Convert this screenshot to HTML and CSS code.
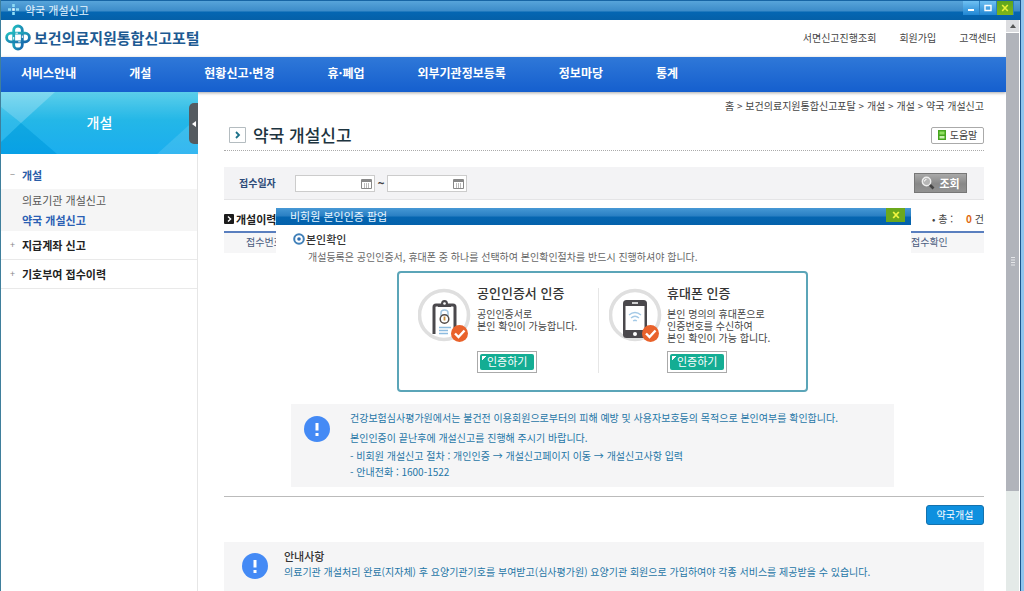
FILE: index.html
```html
<!DOCTYPE html>
<html lang="ko">
<head>
<meta charset="utf-8">
<title>약국 개설신고</title>
<link rel="stylesheet" href="styles.css">
</head>
<body>
<div class="window">
  <header class="titlebar">
    <svg class="titlebar-icon" width="11" height="11" viewBox="0 0 11 11"><path d="M4.200 0h2.600v3H4.200zM4.200 8h2.600v3H4.200zM0 4.200h3v2.600H0zM8 4.200h3v2.600H8z" fill="#8fdcf5"/><path d="M4.200 4.200h2.600v2.600H4.200z" fill="#e6faff"/></svg>
    <span class="titlebar-text">약국 개설신고</span>
    <div class="window-buttons">
      <button class="win-btn" aria-label="최소화"><svg width="8" height="8" viewBox="0 0 8 8"><path d="M1 6h6" stroke="#fff" stroke-width="2"/></svg></button>
      <button class="win-btn" aria-label="최대화"><svg width="8" height="8" viewBox="0 0 8 8"><path d="M1 1.500h6v5H1z" fill="none" stroke="#fff" stroke-width="1.400"/></svg></button>
      <button class="win-btn win-close" aria-label="닫기"><svg width="8" height="8" viewBox="0 0 8 8"><path d="M1.200 1l5.600 6M6.800 1L1.200 7" stroke="#eaf13a" stroke-width="1.600"/></svg></button>
    </div>
  </header>
  <div class="viewport">
    <div class="page">
      <div class="top">
        <a class="brand" href="#">
          <svg width="26" height="27" viewBox="0 0 26 27">
            <defs><linearGradient id="lg" x1="0" y1="0" x2="1" y2="1"><stop offset="0" stop-color="#22bcc0"/><stop offset="1" stop-color="#1667ac"/></linearGradient></defs>
            <rect x="8.7" y="2" width="8.6" height="23" rx="4.3" fill="none" stroke="url(#lg)" stroke-width="2.8"/>
            <rect x="1.6" y="9.2" width="22.8" height="8.6" rx="4.3" fill="none" stroke="url(#lg)" stroke-width="2.8"/>
            <path d="M10.5 9.2h2.4M13.2 17.8h2.4M8.7 13v2.6M17.3 11.5V14" stroke="#fff" stroke-width="1"/>
          </svg>
          <span>보건의료지원통합신고포털</span>
        </a>
        <div class="util"><a href="#">서면신고진행조회</a><a href="#">회원가입</a><a href="#">고객센터</a></div>
      </div>
      <nav class="gnb">
        <a href="#">서비스안내</a><a href="#">개설</a><a href="#">현황신고·변경</a><a href="#">휴·폐업</a><a href="#">외부기관정보등록</a><a href="#">정보마당</a><a href="#">통계</a>
      </nav>
      <div class="columns">
        <aside class="side">
          <div class="side-head">
            <svg class="side-art" viewBox="0 0 197 62" preserveAspectRatio="none"><path d="M0 0h54L20 31 0 15z" fill="#fff" opacity=".28"/><path d="M0 15l20 16L0 50z" fill="#fff" opacity=".12"/><path d="M20 31l36 31H0V50z" fill="#0880c4" opacity=".18"/><path d="M54 0L20 31l36 31h100l41-37V0z" fill="#fff" opacity=".07"/><path d="M156 62l41-37v37z" fill="#fff" opacity=".18"/></svg>
            <h2>개설</h2>
            <button class="side-toggle" aria-label="메뉴 접기"><svg width="4" height="6" viewBox="0 0 4 6"><path d="M4 0v6L0 3z" fill="#fff"/></svg></button>
          </div>
          <ul class="menu">
            <li>
              <a class="menu-item open" href="#"><i>−</i>개설</a>
              <ul class="submenu"><li><a href="#">의료기관 개설신고</a></li><li><a class="current" href="#">약국 개설신고</a></li></ul>
            </li>
            <li><a class="menu-item" href="#"><i>+</i>지급계좌 신고</a></li>
            <li><a class="menu-item" href="#"><i>+</i>기호부여 접수이력</a></li>
          </ul>
        </aside>
        <main class="content">
          <div class="crumbs">홈 &gt; 보건의료지원통합신고포탈 &gt; 개설 &gt; 개설 &gt; 약국 개설신고</div>
          <div class="title-row">
            <svg width="17" height="16" viewBox="0 0 17 16"><path d="M.5.5h16v15H.5z" fill="#fff" stroke="#b4bcc0"/><path d="M7 5l3 3-3 3" fill="none" stroke="#1c7189" stroke-width="1.8"/></svg>
            <h1>약국 개설신고</h1>
            <button class="help"><svg width="8" height="10" viewBox="0 0 8 10"><path d="M0 0h8v10H0z" fill="#46a51e"/><path d="M1.5 1.5h5v3h-5z" fill="#8fe05f"/><path d="M1.5 6h5v2.5h-5z" fill="#c9f2b0"/></svg>도움말</button>
          </div>
          <form class="search">
            <label for="from">접수일자</label>
            <span class="date"><input id="from" type="text"><svg width="11" height="11" viewBox="0 0 11 11"><path d="M.5 1.5h10v9H.5z" fill="#fff" stroke="#888"/><path d="M1 3h9" stroke="#888" stroke-width="2"/><path d="M3.5 5v5M5.5 5v5M7.5 5v5" stroke="#aaa" stroke-width=".8"/></svg></span>
            <span class="tilde">~</span>
            <span class="date"><input id="to" type="text" aria-label="접수일자 종료"><svg width="11" height="11" viewBox="0 0 11 11"><path d="M.5 1.5h10v9H.5z" fill="#fff" stroke="#888"/><path d="M1 3h9" stroke="#888" stroke-width="2"/><path d="M3.5 5v5M5.5 5v5M7.5 5v5" stroke="#aaa" stroke-width=".8"/></svg></span>
            <button class="query" type="button"><svg width="14" height="14" viewBox="0 0 14 14"><path d="M8.5 8.5l4 4" stroke="#444" stroke-width="2.6"/><circle cx="5.5" cy="5.5" r="4.2" fill="#b5b5b5" stroke="#eee" stroke-width="1.4"/><path d="M3.4 5.5a2.2 2.2 0 0 1 2.1-2.1" fill="none" stroke="#fff"/></svg>조회</button>
          </form>
          <section class="results">
            <div class="results-head">
              <svg width="10" height="10" viewBox="0 0 10 10"><rect width="10" height="10" rx="1" fill="#1c1c1c"/><path d="M4 2.5L6.6 5 4 7.5" fill="none" stroke="#fff" stroke-width="1.4"/></svg>
              <h3>개설이력</h3>
              <p class="total"><span>• 총 :</span><span><b>0</b> 건</span></p>
            </div>
            <table><thead><tr><th>접수번호</th><th class="last">접수확인</th></tr></thead></table>
            <div class="popup" role="dialog" aria-labelledby="popup-title">
              <div class="popup-bar"><span id="popup-title">비회원 본인인증 팝업</span><button class="popup-close" aria-label="팝업 닫기"><svg width="8" height="8" viewBox="0 0 8 8"><path d="M1.2 1l5.6 6M6.8 1L1.2 7" stroke="#f2f540" stroke-width="1.8"/></svg></button></div>
              <div class="popup-body">
                <h4><svg width="12" height="12" viewBox="0 0 12 12"><circle cx="6" cy="6" r="4.8" fill="#fff" stroke="#3f7fb8" stroke-width="2"/><circle cx="6" cy="6" r="1.8" fill="#2d6db0"/></svg>본인확인</h4>
                <p class="lead">개설등록은 공인인증서, 휴대폰 중 하나를 선택하여 본인확인절차를 반드시 진행하셔야 합니다.</p>
                <div class="auth">
                  <div class="auth-card">
                    <svg width="54" height="56" viewBox="0 0 54 56">
                      <circle cx="26" cy="27" r="24.5" fill="#fff" stroke="#dfdfdf" stroke-width="3.6"/>
                      <path d="M16 46V19q0-2 2-2h17q2 0 2 2v27" fill="#fff" stroke="#4a484c" stroke-width="3"/>
                      <path d="M20 19v-3h3q0-4 3.500-4t3.500 4h3v3z" fill="#4a484c"/><circle cx="26.500" cy="15.500" r="1.300" fill="#fff"/>
                      <path d="M23 28v-3q0-3 3.500-3t3.500 3v3" fill="none" stroke="#9fc3de" stroke-width="1.500"/>
                      <circle cx="26.500" cy="31" r="4.300" fill="#fff" stroke="#514a48" stroke-width="1.500"/><path d="M26.500 28.500v4" stroke="#c98f3c" stroke-width="1.800"/>
                      <path d="M21 39.500h12M21 42.500h9M21 45.500h9" stroke="#8cbbe0" stroke-width="1.300"/>
                      <circle cx="41.500" cy="45.500" r="8.500" fill="#e9622b"/><path d="M37 45.500l3.500 3.500 6-6.500" fill="none" stroke="#fff" stroke-width="2.400"/>
                    </svg>
                    <div class="auth-text"><h5>공인인증서 인증</h5><p>공인인증서로<br>본인 확인이 가능합니다.</p><button class="auth-btn"><span>인증하기</span></button></div>
                  </div>
                  <div class="auth-card">
                    <svg width="54" height="56" viewBox="0 0 54 56">
                      <circle cx="26" cy="27" r="24.5" fill="#fff" stroke="#dfdfdf" stroke-width="3.6"/>
                      <rect x="14" y="12" width="24" height="38" rx="3.500" fill="#4a484c"/><path d="M16.500 18h19v24h-19z" fill="#fff"/><path d="M23 15h6" stroke="#fff" stroke-width="1.500"/><circle cx="26" cy="46" r="2" fill="#fff"/>
                      <path d="M20 27q6-5 12 0M22 30q4-3.500 8 0M24.200 33q1.800-1.600 3.600 0" fill="none" stroke="#a3c9e6" stroke-width="1.400"/>
                      <circle cx="41.500" cy="45.500" r="8.500" fill="#e9622b"/><path d="M37 45.500l3.500 3.500 6-6.500" fill="none" stroke="#fff" stroke-width="2.400"/>
                    </svg>
                    <div class="auth-text"><h5>휴대폰 인증</h5><p>본인 명의의 휴대폰으로<br>인증번호를 수신하여<br>본인 확인이 가능 합니다.</p><button class="auth-btn"><span>인증하기</span></button></div>
                  </div>
                </div>
                <div class="info">
                  <svg width="26" height="26" viewBox="0 0 26 26"><circle cx="13" cy="13" r="13" fill="#448af5"/><path d="M13 7v7.500M13 17v3" stroke="#fff" stroke-width="3"/></svg>
                  <div class="info-text">
                    <p>건강보험심사평가원에서는 불건전 이용회원으로부터의 피해 예방 및 사용자보호등의 목적으로 본인여부를 확인합니다.</p>
                    <p>본인인증이 끝난후에 개설신고를 진행해 주시기 바랍니다.</p>
                    <ul><li>- 비회원 개설신고 절차 : 개인인증 → 개설신고페이지 이동 → 개설신고사항 입력</li><li>- 안내전화 : 1600-1522</li></ul>
                  </div>
                </div>
              </div>
            </div>
          </section>
          <div class="actions"><button class="primary">약국개설</button></div>
          <section class="notice">
            <svg width="26" height="26" viewBox="0 0 26 26"><circle cx="13" cy="13" r="13" fill="#448af5"/><path d="M13 7v7.500M13 17v3" stroke="#fff" stroke-width="3"/></svg>
            <div><h3>안내사항</h3><p>의료기관 개설처리 완료(지자체) 후 요양기관기호를 부여받고(심사평가원) 요양기관 회원으로 가입하여야 각종 서비스를 제공받을 수 있습니다.</p></div>
          </section>
        </main>
      </div>
    </div>
    <div class="scrollbar">
      <button class="scroll-up" aria-label="위로"><svg width="6" height="4" viewBox="0 0 6 4"><path d="M3 0l3 4H0z" fill="#555"/></svg></button>
      <div class="thumb"><svg width="4" height="9" viewBox="0 0 4 9"><path d="M0 .5h4M0 3h4M0 5.500h4M0 8h4" stroke="#e6e7ea"/></svg></div>
      <div class="track"></div>
    </div>
  </div>
</div>
</body>
</html>
```
FILE: styles.css
```css
* { box-sizing: border-box; }
body, h1, h2, h3, h4, h5, p, ul { margin: 0; padding: 0; }
body {
  height: 100vh;
  overflow: hidden;
  background: #8ec5ee;
  color: #444;
  font: 10px/12px "Noto Sans CJK KR", "Liberation Sans", sans-serif;
}
ul { list-style: none; }
a { color: inherit; text-decoration: none; }
button { margin: 0; padding: 0; border: 0; font: inherit; color: inherit; }
svg { display: block; flex: none; }

.window {
  display: flex;
  flex-direction: column;
  height: 100vh;
  margin-right: 3px;
  border-left: 1px solid #3f7f9c;
  border-right: 1px solid #1c568c;
  background: #fff;
}
.titlebar {
  display: flex;
  flex: none;
  align-items: center;
  height: 20px;
  padding: 0 6px 2px 7px;
  border-top: 1px solid #1765a5;
  background: linear-gradient(#57a4da 0, #3d8dca 50%, #0466b2 60%, #0560a8 100%);
  color: #e6f5ff;
  font-size: 11px;
}
.titlebar-text { margin-left: 6px; }
.window-buttons { display: flex; align-self: flex-start; margin-left: auto; }
.win-btn {
  display: grid;
  place-items: center;
  width: 17px;
  height: 14px;
  border-right: 1px solid #2b7fc0;
  background: linear-gradient(#6fc0f2, #2187d4);
}
.win-close { background: linear-gradient(#5da51f, #7fb51a); }

.viewport { display: flex; flex: 1; min-height: 0; }
.page { flex: 1; min-width: 0; overflow: hidden; }
.top {
  display: flex;
  align-items: center;
  justify-content: space-between;
  height: 37px;
  padding: 0 10px 2px 4px;
}
.brand { display: flex; align-items: center; gap: 3px; color: #1d5a92; font-size: 15px; line-height: 20px; font-weight: bold; }
.util { display: flex; gap: 23px; }
.gnb {
  position: relative;
  display: flex;
  align-items: center;
  gap: 53px;
  height: 35px;
  padding: 0 20px 4px;
  background: linear-gradient(#2f78d8, #155fce);
  box-shadow: 0 1px 3px rgba(0, 0, 0, .35);
  color: #fff;
  font-size: 12px;
  line-height: 16px;
  font-weight: bold;
  white-space: nowrap;
}
.columns { display: flex; min-height: 500px; }

.side { flex: none; width: 197px; border-right: 1px solid #e6e6e6; }
.side-head {
  position: relative;
  display: grid;
  place-items: center;
  height: 62px;
  margin-right: -1px;
  padding-bottom: 3px;
  background: linear-gradient(#4fcbe9, #14b2e6 45%, #09a8ee);
}
.side-art { position: absolute; inset: 0; width: 100%; height: 100%; }
.side-head h2 { position: relative; color: #fff; font-size: 14px; line-height: 20px; font-weight: 500; }
.side-toggle {
  position: absolute;
  top: 11px;
  right: 0;
  display: grid;
  place-items: center;
  width: 9px;
  height: 41px;
  border-radius: 5px 0 0 5px;
  background: #555b60;
}
.menu { padding-top: 7px; color: #222; font-size: 11px; line-height: 14px; }
.menu-item {
  display: flex;
  align-items: center;
  height: 28px;
  padding: 0 0 1px 8px;
  font-weight: bold;
}
.menu > li + li .menu-item { height: 29px; border-bottom: 1px solid #e9e9e9; }
.menu-item i { width: 13px; padding-left: 1px; color: #888; font-size: 9px; font-style: normal; font-weight: normal; }
.menu-item.open { color: #2a5da8; }
.submenu { padding: 1px 0; background: #f5f5f5; }
.submenu a { display: flex; align-items: center; height: 20px; padding-left: 21px; color: #555; }
.submenu .current { color: #2b5fb4; font-weight: bold; }

.content { flex: 1; min-width: 0; padding: 8px 22px 0 26px; }
.crumbs { text-align: right; }
.title-row {
  display: flex;
  align-items: center;
  height: 39px;
  padding: 8px 0 0 5px;
  border-bottom: 1px dotted #aaa;
}
.title-row h1 { margin-left: 7px; color: #1d3440; font-size: 17px; line-height: 24px; font-weight: 500; }
.help {
  display: flex;
  align-items: center;
  justify-content: center;
  gap: 4px;
  width: 53px;
  height: 17px;
  margin-left: auto;
  border: 1px solid #aaa;
  border-radius: 2px;
  background: #fff;
}
.search {
  display: flex;
  align-items: center;
  height: 33px;
  margin: 16px 0 0;
  padding: 0 17px 0 15px;
  border-bottom: 1px solid #e4e4e6;
  background: #f3f3f5;
}
.search label { width: 56px; color: #2c4a77; font-weight: bold; }
.date { display: flex; align-items: center; width: 80px; height: 17px; padding-right: 2px; border: 1px solid #ccc; background: #fff; }
.date input { flex: 1; min-width: 0; height: 15px; padding: 0 3px; border: 0; background: none; font: inherit; outline: 0; }
.tilde { width: 12px; font-size: 12px; font-weight: bold; text-align: center; }
.query {
  display: flex;
  align-items: center;
  justify-content: center;
  gap: 4px;
  width: 53px;
  height: 20px;
  margin-left: auto;
  border: 1px solid #777;
  background: linear-gradient(#a9a9a9, #888 55%, #929292);
  color: #fff;
  font-size: 11px;
  font-weight: bold;
}

.results { position: relative; height: 297px; padding-top: 10px; border-bottom: 1px solid #bbb; }
.results-head { display: flex; align-items: center; height: 21px; padding-bottom: 3px; }
.results-head h3 { margin-left: 2px; color: #222; font-size: 11px; line-height: 14px; }
.total { display: flex; gap: 13px; margin-left: auto; }
.total b { color: #e06a10; }
.results table { width: 100%; border-collapse: collapse; border-top: 2px solid #5a7fbf; background: #f6f6f7; }
.results th { height: 21px; padding: 0 0 2px 22px; color: #4b5c80; font-weight: normal; text-align: left; }
.results th.last { width: 73px; padding-left: 0; }

.popup { position: absolute; top: 8px; left: 52px; right: 73px; background: #fff; }
.popup-bar {
  display: flex;
  align-items: center;
  height: 17px;
  padding: 0 6px 1px 14px;
  background: linear-gradient(#4698d5, #2a80c4 45%, #0565b0 55%, #0461ab);
  color: #e9f6ff;
  font-size: 11px;
}
.popup-close { display: grid; place-items: center; align-self: flex-start; width: 19px; height: 14px; margin-left: auto; background: #6ba81c; }
.popup-body { padding: 7px 17px 3px 15px; }
.popup h4 { display: flex; align-items: center; gap: 1px; height: 14px; padding-left: 2px; color: #333; font-size: 11px; font-weight: 500; }
.lead { margin: 4px 0 0 17px; color: #666; line-height: 13px; }
.auth {
  display: grid;
  grid-template-columns: 181px 1fr;
  width: 411px;
  height: 121px;
  margin: 8px auto 0 106px;
  padding: 15px 18px 0 19px;
  border: 2px solid #5ba5b8;
  border-radius: 4px;
}
.auth-card { display: flex; gap: 5px; height: 85px; }
.auth-card + .auth-card { gap: 4px; padding-left: 10px; }
.auth-card:first-child { border-right: 1px solid #e6e6e6; }
.auth-text { display: flex; flex-direction: column; align-items: flex-start; height: 85px; white-space: nowrap; }
.auth-text h5 { margin-top: -3px; color: #333; font-size: 13px; line-height: 16px; font-weight: 500; }
.auth-text p { margin-top: 7px; }
.auth-btn { margin-top: auto; padding: 2px; border: 1px solid #aaa; background: #fff; color: #fff; font-size: 11px; }
.auth-btn span {
  display: block;
  padding: 0 7px 1px;
  border-radius: 2px;
  background: linear-gradient(135deg, #fff 3px, transparent 3px) 2px 2px / 5px 5px no-repeat, #14ad93;
  line-height: 15px;
}
.info { display: flex; gap: 20px; min-height: 83px; margin-top: 12px; padding: 8px 0 0 13px; background: #f5f5f6; color: #1f76a6; white-space: nowrap; }
.info > svg { margin-top: 4px; }
.info-text p { margin-bottom: 8px; }
.info-text li { margin-bottom: 4px; }
.info-text p + ul { margin-top: -2px; }

.actions { display: flex; justify-content: flex-end; padding: 8px 0 17px; }
.primary { width: 58px; height: 20px; border: 1px solid #1472ae; border-radius: 3px; background: #0e90df; color: #fff; }
.notice { display: flex; gap: 16px; min-height: 60px; padding: 7px 0 0 18px; background: #f5f5f6; color: #1f76a6; }
.notice > svg { margin-top: 4px; }
.notice h3 { margin-bottom: 3px; color: #333; font-size: 11px; line-height: 14px; font-weight: 500; }

.scrollbar { display: flex; flex-direction: column; flex: none; width: 14px; padding-right: 1px; background: #fff; }
.scroll-up { display: grid; place-items: center; height: 12px; background: #dcdde0; }
.thumb { display: grid; place-items: center; flex: 82; margin-top: 1px; background: #b1b4bb; }
.track { flex: 18; background: #e4eae8; }
```
